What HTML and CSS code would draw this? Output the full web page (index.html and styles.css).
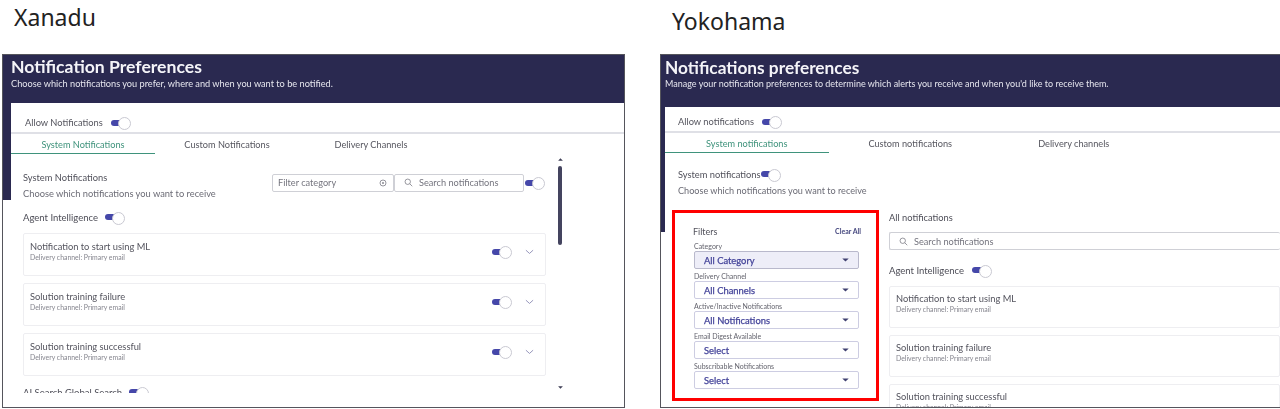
FILE: index.html
```html
<!DOCTYPE html>
<html lang="en">
<head>
<meta charset="utf-8">
<title>Xanadu and Yokohama notification preferences</title>
<link rel="stylesheet" href="styles.css">
</head>
<body>
<svg class="defs" width="0" height="0" aria-hidden="true">
  <symbol id="i-search" viewBox="0 0 12 12"><circle cx="5" cy="5" r="3.6" fill="none" stroke="currentColor" stroke-width="1"/><path d="M7.7 7.7 11 11" stroke="currentColor" stroke-width="1" fill="none"/></symbol>
  <symbol id="i-chev" viewBox="0 0 10 6"><path d="M1 1l4 3.6L9 1" fill="none" stroke="currentColor" stroke-width="1"/></symbol>
  <symbol id="i-caret" viewBox="0 0 8 5"><path d="M0 .5h8L4 4.5z" fill="currentColor"/></symbol>
  <symbol id="i-info" viewBox="0 0 8 8"><circle cx="4" cy="4" r="3" fill="none" stroke="currentColor" stroke-width=".9"/><circle cx="4" cy="4" r="1" fill="currentColor"/></symbol>
</svg>

<section class="col col-x">
  <h2 class="release">Xanadu</h2>
  <div class="frame">
    <div class="rail"></div>
    <div class="main">
      <header class="hero">
        <h1>Notification Preferences</h1>
        <p>Choose which notifications you prefer, where and when you want to be notified.</p>
      </header>
      <div class="card">
        <div class="allow"><span>Allow Notifications</span><i class="toggle"></i></div>
        <nav class="tabs">
          <a class="tab active">System Notifications</a>
          <a class="tab">Custom Notifications</a>
          <a class="tab">Delivery Channels</a>
        </nav>
        <div class="body-x">
          <div class="scroll">
            <div class="intro">
              <div class="intro-text">
                <div class="sys">System Notifications</div>
                <div class="choose">Choose which notifications you want to receive</div>
              </div>
              <div class="field filter"><span>Filter category</span><svg class="info"><use href="#i-info"/></svg></div>
              <div class="field search-x"><svg class="mag"><use href="#i-search"/></svg><span>Search notifications</span></div>
              <i class="toggle"></i>
            </div>
            <div class="group"><span>Agent Intelligence</span><i class="toggle"></i></div>
            <div class="item"><div class="item-text"><div class="name">Notification to start using ML</div><div class="sub">Delivery channel: Primary email</div></div><i class="toggle"></i><svg class="chev"><use href="#i-chev"/></svg></div>
            <div class="item"><div class="item-text"><div class="name">Solution training failure</div><div class="sub">Delivery channel: Primary email</div></div><i class="toggle"></i><svg class="chev"><use href="#i-chev"/></svg></div>
            <div class="item"><div class="item-text"><div class="name">Solution training successful</div><div class="sub">Delivery channel: Primary email</div></div><i class="toggle"></i><svg class="chev"><use href="#i-chev"/></svg></div>
            <div class="group last"><span>AI Search Global Search</span><i class="toggle"></i></div>
          </div>
          <div class="scrollbar">
            <svg class="sb-arrow up"><use href="#i-caret"/></svg>
            <div class="thumb"></div>
            <svg class="sb-arrow down"><use href="#i-caret"/></svg>
          </div>
        </div>
      </div>
    </div>
  </div>
</section>

<section class="col col-y">
  <h2 class="release">Yokohama</h2>
  <div class="frame">
    <div class="rail"></div>
    <div class="main">
      <header class="hero">
        <h1>Notifications preferences</h1>
        <p>Manage your notification preferences to determine which alerts you receive and when you'd like to receive them.</p>
      </header>
      <div class="card">
        <div class="allow"><span>Allow notifications</span><i class="toggle"></i></div>
        <nav class="tabs">
          <a class="tab active">System notifications</a>
          <a class="tab">Custom notifications</a>
          <a class="tab">Delivery channels</a>
        </nav>
        <div class="intro-y">
          <div class="sys"><span>System notifications</span><i class="toggle"></i></div>
          <div class="choose">Choose which notifications you want to receive</div>
        </div>
        <div class="split">
          <aside class="filters">
            <div class="filters-head"><span>Filters</span><a>Clear All</a></div>
            <label>Category</label>
            <div class="select on"><span>All Category</span><svg class="caret"><use href="#i-caret"/></svg></div>
            <label>Delivery Channel</label>
            <div class="select"><span>All Channels</span><svg class="caret"><use href="#i-caret"/></svg></div>
            <label>Active/Inactive Notifications</label>
            <div class="select"><span>All Notifications</span><svg class="caret"><use href="#i-caret"/></svg></div>
            <label>Email Digest Available</label>
            <div class="select"><span>Select</span><svg class="caret"><use href="#i-caret"/></svg></div>
            <label>Subscribable Notifications</label>
            <div class="select"><span>Select</span><svg class="caret"><use href="#i-caret"/></svg></div>
          </aside>
          <div class="list">
            <div class="all">All notifications</div>
            <div class="field search-y"><svg class="mag"><use href="#i-search"/></svg><span>Search notifications</span></div>
            <div class="group"><span>Agent Intelligence</span><i class="toggle"></i></div>
            <div class="item"><div class="item-text"><div class="name">Notification to start using ML</div><div class="sub">Delivery channel: Primary email</div></div></div>
            <div class="item"><div class="item-text"><div class="name">Solution training failure</div><div class="sub">Delivery channel: Primary email</div></div></div>
            <div class="item"><div class="item-text"><div class="name">Solution training successful</div><div class="sub">Delivery channel: Primary email</div></div></div>
          </div>
        </div>
      </div>
    </div>
  </div>
</section>
</body>
</html>
```

FILE: styles.css
```css
* { box-sizing: border-box; }
html, body { height: 100%; }
body {
  margin: 0;
  width: 1280px;
  height: 409px;
  overflow: hidden;
  display: flex;
  background: #fff;
  font-family: Lato, "Liberation Sans", sans-serif;
  color: #4b4b55;
}
.defs { display: block; width: 0; height: 0; }

.col { display: flex; flex-direction: column; height: 409px; }
.col-x { width: 660px; padding: 0 35px 1px 2px; }
.col-y { width: 620px; padding-bottom: 1px; }

.release {
  margin: 0;
  height: 54px;
  font: 400 23px/1 "Noto Sans", sans-serif;
  color: #222;
}
.col-x .release { padding: 6px 0 0 12px; }
.col-y .release { padding: 10px 0 0 12px; }

.frame {
  flex: 1;
  min-height: 0;
  display: flex;
  overflow: hidden;
  background: #fff;
  border: 1px solid #55555c;
  filter: blur(.4px);
}
.col-y .frame { border-right: 0; }
.rail { flex: none; width: 8px; height: 145px; background: #2a2950; }
.col-y .rail { width: 4px; height: 177px; }
.main { flex: 1; min-width: 0; display: flex; flex-direction: column; }

.hero { flex: none; height: 48px; padding-top: 2px; background: #2a2950; color: #fff; }
.col-y .hero { height: 52px; padding-top: 3px; }
.hero h1 { margin: 0; font-size: 17.6px; line-height: 20px; font-weight: 700; color: #f4f4f8; }
.hero p { margin: 0; font-size: 9.2px; line-height: 14px; color: #e6e6ee; white-space: nowrap; }
.col-y .hero h1 { font-size: 17.3px; }
.col-y .hero p { margin-top: -1px; font-size: 9px; }

.card { flex: 1; min-height: 0; background: #fff; border-radius: 5px 0 0 0; overflow: hidden; display: flex; flex-direction: column; }

.allow { flex: none; height: 31px; display: flex; align-items: center; gap: 8px; padding: 10px 0 0 14px; font-size: 9.3px; color: #55555e; border-bottom: 2px solid #dfe0e6; }
.col-y .allow { height: 26px; padding-top: 5px; padding-left: 13px; gap: 8px; }

.toggle { flex: none; position: relative; display: block; width: 20px; height: 11px; }
.toggle::before { content: ""; position: absolute; left: 0; top: 2.5px; width: 13px; height: 6px; border-radius: 3px; background: #4547a9; }
.toggle::after { content: ""; position: absolute; right: 0; top: 0; width: 11px; height: 11px; border-radius: 50%; background: #fff; border: 1px solid #c9c9d2; }

.tabs { flex: none; display: flex; height: 20px; }
.tab { width: 144px; text-align: center; font-size: 9.2px; line-height: 21px; color: #56565f; }
.tab.active { color: #3f937c; border-bottom: 1px solid #3f937c; }
.col-y .tabs { height: 20px; }
.col-y .tab { width: 163.5px; line-height: 21px; }

.body-x { flex: 1; min-height: 0; display: flex; padding-left: 12px; }
.scroll { flex: none; width: 523px; height: 239px; overflow: hidden; }
.intro { display: flex; align-items: center; height: 41px; margin-top: 13px; }
.intro-text { width: 249px; margin-bottom: 3px; }
.sys { font-size: 9.3px; line-height: 16px; color: #50505a; display: flex; align-items: center; }
.choose { font-size: 9.3px; line-height: 16px; color: #6b6b75; white-space: nowrap; }

.field { display: flex; align-items: center; height: 18px; border: 1px solid #cfd0d6; border-radius: 2px; background: #fff; font-size: 9.2px; color: #74747e; }
.filter { width: 122px; padding: 0 6px 0 5px; justify-content: space-between; margin-bottom: 10px; }
.search-x { width: 130px; padding-left: 9px; gap: 6px; margin-bottom: 10px; margin-right: 1px; }
.intro > .toggle { margin-bottom: 10px; }
.mag { flex: none; width: 9px; height: 9px; color: #75757f; }
.info { flex: none; width: 8px; height: 8px; color: #8a8a92; }

.group { display: flex; align-items: center; gap: 7px; height: 16px; margin: 1px 0 8px; font-size: 9.5px; color: #4d4d57; }
.item { display: flex; align-items: flex-start; height: 43px; margin-bottom: 7px; padding: 6px 7px 0 6px; border: 1px solid #eeeef1; border-radius: 2px; }
.item-text { flex: 1; min-width: 0; }
.name { font-size: 9.3px; line-height: 13px; color: #53535d; }
.sub { font-size: 6.9px; line-height: 8px; color: #85858e; }
.item .toggle { margin: 6px 13px 0 0; }
.chev { flex: none; width: 9px; height: 6px; margin: 9px 4px 0 0; color: #8b8bb4; }
.group.last { margin-top: 8px; }

.scrollbar { flex: none; width: 17px; margin-left: 11px; height: 239px; display: flex; flex-direction: column; align-items: flex-start; padding-top: 4px; }
.sb-arrow { flex: none; width: 5px; height: 3px; margin-left: 1px; color: #3d3d55; }
.sb-arrow.up { transform: rotate(180deg); }
.thumb { width: 4px; height: 79px; margin: 5px 0 0 1px; border-radius: 2px; background: #44445f; }
.sb-arrow.down { margin-top: 141px; }

.intro-y { flex: none; height: 57px; padding: 14px 0 0 13px; }
.intro-y .sys { gap: 1px; height: 16px; }
.intro-y .sys .toggle { margin-bottom: 2px; }
.intro-y .choose { font-size: 9.1px; }

.split { flex: 1; min-height: 0; display: flex; align-items: flex-start; }
.filters { flex: none; width: 207px; height: 191px; margin-left: 7px; border: 3px solid #f00; padding: 10px 15px 0 18px; }
.filters-head { display: flex; justify-content: space-between; align-items: center; height: 16px; margin-bottom: 1px; font-size: 9px; color: #52525c; }
.filters-head a { font-size: 7px; font-weight: 700; color: #46487f; }
.filters label { display: block; margin-left: 1px; font-size: 7px; line-height: 12px; height: 11px; color: #63636d; white-space: nowrap; }
.select { display: flex; align-items: center; justify-content: space-between; height: 18px; margin: 0 2px 1px 1px; padding: 0 9px; border: 1px solid #cdcde2; border-radius: 2px; font-size: 9.4px; color: #44449a; -webkit-text-stroke: .25px #44449a; }
.select.on { background: #eeeef8; border-color: #b9b9cc; }
.caret { flex: none; width: 7px; height: 4px; color: #3f4070; }

.list { flex: 1; min-width: 0; margin-left: 10px; }
.all { height: 14px; font-size: 9.3px; line-height: 15px; color: #4d4d57; }
.search-y { width: 100%; margin-top: 8px; padding-left: 9px; gap: 6px; border-right: 0; }
.col-y .group { margin: 12px 0 8px; gap: 8px; }
.col-y .item { height: 42px; padding-top: 5px; }
```
